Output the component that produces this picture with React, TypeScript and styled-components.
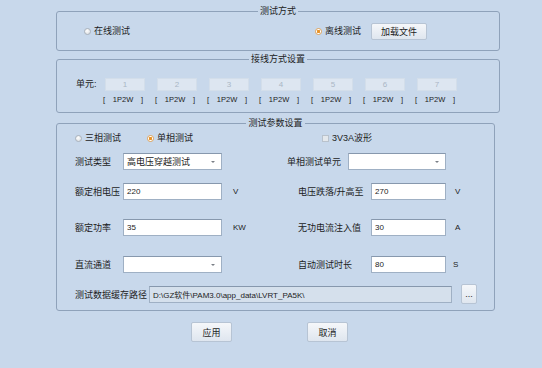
import React from 'react'
import styled, { createGlobalStyle } from 'styled-components'

const colors = {
  page: '#c8d8eb',
  groupBorder: '#8fa2ba',
  text: '#1c1c1c',
  fieldBorder: '#9fb0c4',
  disabledText: '#aab6c5',
  orange: '#e8942a',
}

const GlobalStyle = createGlobalStyle`
  html, body {
    margin: 0;
    padding: 0;
    background: ${colors.page};
  }
  body {
    font-family: "Liberation Sans", "Noto Sans CJK SC", sans-serif;
    font-size: 9px;
    color: ${colors.text};
  }
`

const Page = styled.div`
  width: 542px;
  height: 368px;
  box-sizing: border-box;
  padding: 5px 0 0 56px;
  overflow: hidden;
`

const Group = styled.fieldset<{ $width: number; $height: number; $mt?: number }>`
  box-sizing: border-box;
  width: ${p => p.$width}px;
  height: ${p => p.$height}px;
  margin: ${p => p.$mt || 0}px 0 0 0;
  padding: 0;
  border: 1px solid ${colors.groupBorder};
  border-radius: 3px;
  min-width: 0;
`

const Title = styled.legend`
  margin: 0 auto;
  padding: 0 2px;
  font-size: 9px;
  line-height: 12px;
`

/* ---------- small controls ---------- */

const RadioDot = styled.span<{ $checked?: boolean }>`
  display: inline-block;
  width: 7px;
  height: 7px;
  box-sizing: border-box;
  border-radius: 50%;
  border: 1px solid ${p => (p.$checked ? '#e2a55a' : '#aab2bb')};
  background: ${p =>
    p.$checked
      ? `radial-gradient(circle, ${colors.orange} 0 1.4px, #fff 1.6px)`
      : 'radial-gradient(circle at 40% 35%, #ffffff, #d4d8dc)'};
`

const CheckBox = styled.span`
  display: inline-block;
  width: 7px;
  height: 7px;
  box-sizing: border-box;
  border: 1px solid #b9c2cc;
  background: #e4e8ec;
`

const Option = styled.label`
  display: flex;
  align-items: center;
  gap: 3px;
  font-size: 9px;
  line-height: 12px;
  white-space: nowrap;
`

const Radio = ({ checked, children }: { checked?: boolean; children: React.ReactNode }) => (
  <Option>
    <RadioDot $checked={checked} />
    {children}
  </Option>
)

const Button = styled.button<{ $w: number; $h: number }>`
  width: ${p => p.$w}px;
  height: ${p => p.$h}px;
  padding: 0;
  margin: 0;
  border: 1px solid #b7c4d4;
  border-radius: 2px;
  background: linear-gradient(#f5f7fa, #dfe6ef);
  font-family: inherit;
  font-size: 9px;
  color: ${colors.text};
`

/* ---------- group 1 ---------- */

const ModeRow = styled.div`
  display: grid;
  grid-template-columns: 231px 56px 56px;
  align-items: center;
  padding: 5px 0 0 27px;
  height: 18px;
`

/* ---------- group 2 ---------- */

const WiringRow = styled.div`
  display: flex;
  align-items: flex-start;
  padding: 13px 0 0 19px;
`

const WiringLabel = styled.span`
  width: 29px;
  line-height: 13px;
`

const UnitList = styled.div`
  display: flex;
  gap: 12px;
`

const Unit = styled.div`
  display: flex;
  flex-direction: column;
  width: 40px;
`

const UnitBox = styled.div`
  height: 13px;
  box-sizing: border-box;
  border: 1px solid #d3deea;
  background: #dde6f1;
  color: ${colors.disabledText};
  font-size: 8px;
  line-height: 11px;
  text-align: center;
`

const Bracket = styled.div`
  display: flex;
  justify-content: space-between;
  margin: 4px 2px 0 -2px;
  font-size: 7.5px;
  line-height: 10px;
  white-space: pre;
`

/* ---------- group 3 ---------- */

const TypeRow = styled.div`
  display: grid;
  grid-template-columns: 72px 175px auto;
  align-items: center;
  height: 12px;
  padding: 3px 0 0 18px;
`

const ParamRow = styled.div<{ $mt: number }>`
  display: grid;
  grid-template-columns: 48px 99px 65px auto;
  align-items: center;
  height: 17px;
  margin-top: ${p => p.$mt}px;
  padding-left: 18px;
`

const Label = styled.span<{ $w?: number }>`
  ${p => (p.$w ? `width: ${p.$w}px;` : '')}
  flex: none;
  white-space: nowrap;
  font-size: 9px;
`

const Field = styled.div<{ $w?: number; $disabled?: boolean }>`
  display: flex;
  align-items: center;
  justify-content: space-between;
  box-sizing: border-box;
  ${p => (p.$w ? `width: ${p.$w}px;` : '')}
  height: 17px;
  padding: 0 6px 0 3px;
  border: 1px solid ${colors.fieldBorder};
  border-top-color: #8798ad;
  background: ${p => (p.$disabled ? '#d5e0ec' : '#ffffff')};
  font-size: 8px;
  white-space: nowrap;
  overflow: hidden;
`

const FieldText = styled.span<{ $cjk?: boolean }>`
  font-size: ${p => (p.$cjk ? 9 : 8)}px;
`

const Arrow = styled.span`
  width: 0;
  height: 0;
  border-left: 2px solid transparent;
  border-right: 2px solid transparent;
  border-top: 2px solid #7a7f86;
`

const UnitText = styled.span<{ $pl: number }>`
  padding-left: ${p => p.$pl}px;
  font-size: 8px;
`

const RightPart = styled.div<{ $pl: number }>`
  display: flex;
  align-items: center;
  padding-left: ${p => p.$pl}px;
`

const PathRow = styled.div`
  display: flex;
  align-items: center;
  margin-top: 11px;
  padding-left: 18px;
  gap: 9px;
`

const Footer = styled.div`
  display: flex;
  gap: 75px;
  margin-top: 11px;
  padding-left: 135px;
`

const Select = ({ w, value }: { w: number; value?: string }) => (
  <Field $w={w}>
    <FieldText $cjk>{value}</FieldText>
    <Arrow />
  </Field>
)

const Input = ({ w, value }: { w: number; value: string }) => (
  <Field $w={w}>
    <FieldText>{value}</FieldText>
  </Field>
)

const rightRows = [
  { label: '电压跌落/升高至', value: '270', unit: 'V', ul: 9 },
  { label: '无功电流注入值', value: '30', unit: 'A', ul: 9 },
  { label: '自动测试时长', value: '80', unit: 'S', ul: 7 },
]

export default function App() {
  return (
    <Page>
      <GlobalStyle />

      <Group $width={444} $height={46}>
        <Title>测试方式</Title>
        <ModeRow>
          <Radio>在线测试</Radio>
          <Radio checked>离线测试</Radio>
          <Button $w={56} $h={17}>加载文件</Button>
        </ModeRow>
      </Group>

      <Group $width={444} $height={60} $mt={2}>
        <Title>接线方式设置</Title>
        <WiringRow>
          <WiringLabel>单元:</WiringLabel>
          <UnitList>
            {[1, 2, 3, 4, 5, 6, 7].map(n => (
              <Unit key={n}>
                <UnitBox>{n}</UnitBox>
                <Bracket>
                  <span>[</span>
                  <span>1P2W</span>
                  <span>]</span>
                </Bracket>
              </Unit>
            ))}
          </UnitList>
        </WiringRow>
      </Group>

      <Group $width={439} $height={194} $mt={4}>
        <Title>测试参数设置</Title>
        <TypeRow>
          <Radio>三相测试</Radio>
          <Radio checked>单相测试</Radio>
          <Option>
            <CheckBox />
            3V3A波形
          </Option>
        </TypeRow>

        <ParamRow $mt={9}>
          <Label>测试类型</Label>
          <Select w={99} value="高电压穿越测试" />
          <span />
          <RightPart $pl={0}>
            <Label $w={61}>单相测试单元</Label>
            <Select w={98} />
          </RightPart>
        </ParamRow>

        <ParamRow $mt={13}>
          <Label>额定相电压</Label>
          <Input w={99} value="220" />
          <UnitText $pl={11}>V</UnitText>
          <RightPart $pl={11}>
            <Label $w={73}>{rightRows[0].label}</Label>
            <Input w={75} value={rightRows[0].value} />
            <UnitText $pl={rightRows[0].ul}>{rightRows[0].unit}</UnitText>
          </RightPart>
        </ParamRow>

        <ParamRow $mt={19}>
          <Label>额定功率</Label>
          <Input w={99} value="35" />
          <UnitText $pl={11}>KW</UnitText>
          <RightPart $pl={11}>
            <Label $w={73}>{rightRows[1].label}</Label>
            <Input w={75} value={rightRows[1].value} />
            <UnitText $pl={rightRows[1].ul}>{rightRows[1].unit}</UnitText>
          </RightPart>
        </ParamRow>

        <ParamRow $mt={20}>
          <Label>直流通道</Label>
          <Select w={99} />
          <span />
          <RightPart $pl={11}>
            <Label $w={73}>{rightRows[2].label}</Label>
            <Input w={75} value={rightRows[2].value} />
            <UnitText $pl={rightRows[2].ul}>{rightRows[2].unit}</UnitText>
          </RightPart>
        </ParamRow>

        <PathRow>
          <Label $w={74} style={{ marginRight: -9 }}>测试数据缓存路径</Label>
          <Field $w={303} $disabled>
            <FieldText>D:\GZ软件\PAM3.0\app_data\LVRT_PA5K\</FieldText>
          </Field>
          <Button $w={16} $h={20}>...</Button>
        </PathRow>
      </Group>

      <Footer>
        <Button $w={41} $h={20}>应用</Button>
        <Button $w={41} $h={20}>取消</Button>
      </Footer>
    </Page>
  )
}
